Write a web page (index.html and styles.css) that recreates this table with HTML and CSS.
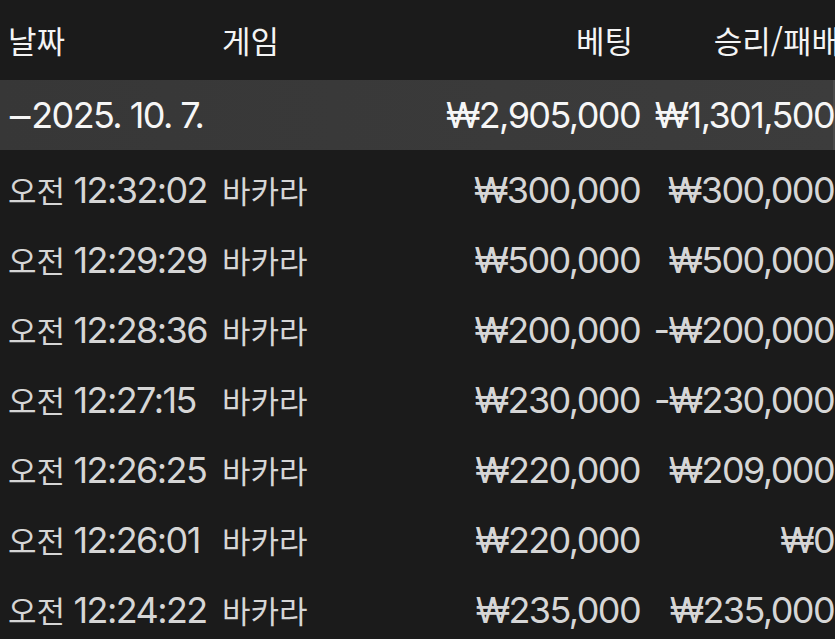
FILE: index.html
```html
<!DOCTYPE html>
<html lang="ko">
<head>
<meta charset="utf-8">
<title>베팅 내역</title>
<link rel="stylesheet" href="styles.css">
</head>
<body>
<div class="table">
  <div class="row head">
    <div class="c date"><span class="ko">날짜</span></div>
    <div class="c game"><span class="ko">게임</span></div>
    <div class="c bet"><span class="ko">베팅</span></div>
    <div class="c win"><span class="ko">승리/패배</span></div>
  </div>
  <div class="row summary">
    <div class="c date"><span class="minus">−</span>2025. 10. 7.</div>
    <div class="c game"></div>
    <div class="c bet">₩2,905,000</div>
    <div class="c win">₩1,301,500</div>
  </div>
  <div class="rows">
    <div class="row item">
      <div class="c date"><span class="ko">오전</span> 12:32:02</div>
      <div class="c game"><span class="ko">바카라</span></div>
      <div class="c bet">₩300,000</div>
      <div class="c win">₩300,000</div>
    </div>
    <div class="row item">
      <div class="c date"><span class="ko">오전</span> 12:29:29</div>
      <div class="c game"><span class="ko">바카라</span></div>
      <div class="c bet">₩500,000</div>
      <div class="c win">₩500,000</div>
    </div>
    <div class="row item">
      <div class="c date"><span class="ko">오전</span> 12:28:36</div>
      <div class="c game"><span class="ko">바카라</span></div>
      <div class="c bet">₩200,000</div>
      <div class="c win">-₩200,000</div>
    </div>
    <div class="row item">
      <div class="c date"><span class="ko">오전</span> 12:27:15</div>
      <div class="c game"><span class="ko">바카라</span></div>
      <div class="c bet">₩230,000</div>
      <div class="c win">-₩230,000</div>
    </div>
    <div class="row item">
      <div class="c date"><span class="ko">오전</span> 12:26:25</div>
      <div class="c game"><span class="ko">바카라</span></div>
      <div class="c bet">₩220,000</div>
      <div class="c win">₩209,000</div>
    </div>
    <div class="row item">
      <div class="c date"><span class="ko">오전</span> 12:26:01</div>
      <div class="c game"><span class="ko">바카라</span></div>
      <div class="c bet">₩220,000</div>
      <div class="c win">₩0</div>
    </div>
    <div class="row item">
      <div class="c date"><span class="ko">오전</span> 12:24:22</div>
      <div class="c game"><span class="ko">바카라</span></div>
      <div class="c bet">₩235,000</div>
      <div class="c win">₩235,000</div>
    </div>
  </div>
</div>
</body>
</html>
```
FILE: styles.css
```css
html, body {
  margin: 0;
  padding: 0;
  background: #1b1b1b;
  overflow: hidden;
}
body {
  width: 835px;
  height: 639px;
  font-family: Inter, "Noto Sans CJK KR", sans-serif;
  font-size: 36px;
  color: #d6d6d6;
}
.table {
  display: flex;
  flex-direction: column;
}
.row {
  display: grid;
  grid-template-columns: 214px 218px 200px 194px;
  padding-left: 8px;
  align-items: center;
  white-space: nowrap;
}
.c {
  line-height: 1;
  letter-spacing: -1.6px;
}
.ko {
  font-family: "Noto Sans CJK KR", sans-serif;
  font-size: 31px;
  letter-spacing: 0;
}
.minus {
  display: inline-block;
  transform: scaleX(1.25);
  margin-left: 0;
  margin-right: 1px;
}
.bet, .win { text-align: right; }
.head {
  height: 80px;
  color: #f4f4f4;
}
.head .bet { padding-right: 7px; }
.head .win { margin-right: -6px; }
.summary {
  height: 70px;
  background: linear-gradient(90deg, #373737, #3c3c3c);
  color: #f6f6f6;
  border-right: 2px solid #4a4a4a;
}
.rows {
  padding-top: 5px;
  display: flex;
  flex-direction: column;
}
.item {
  height: 70px;
}
```
